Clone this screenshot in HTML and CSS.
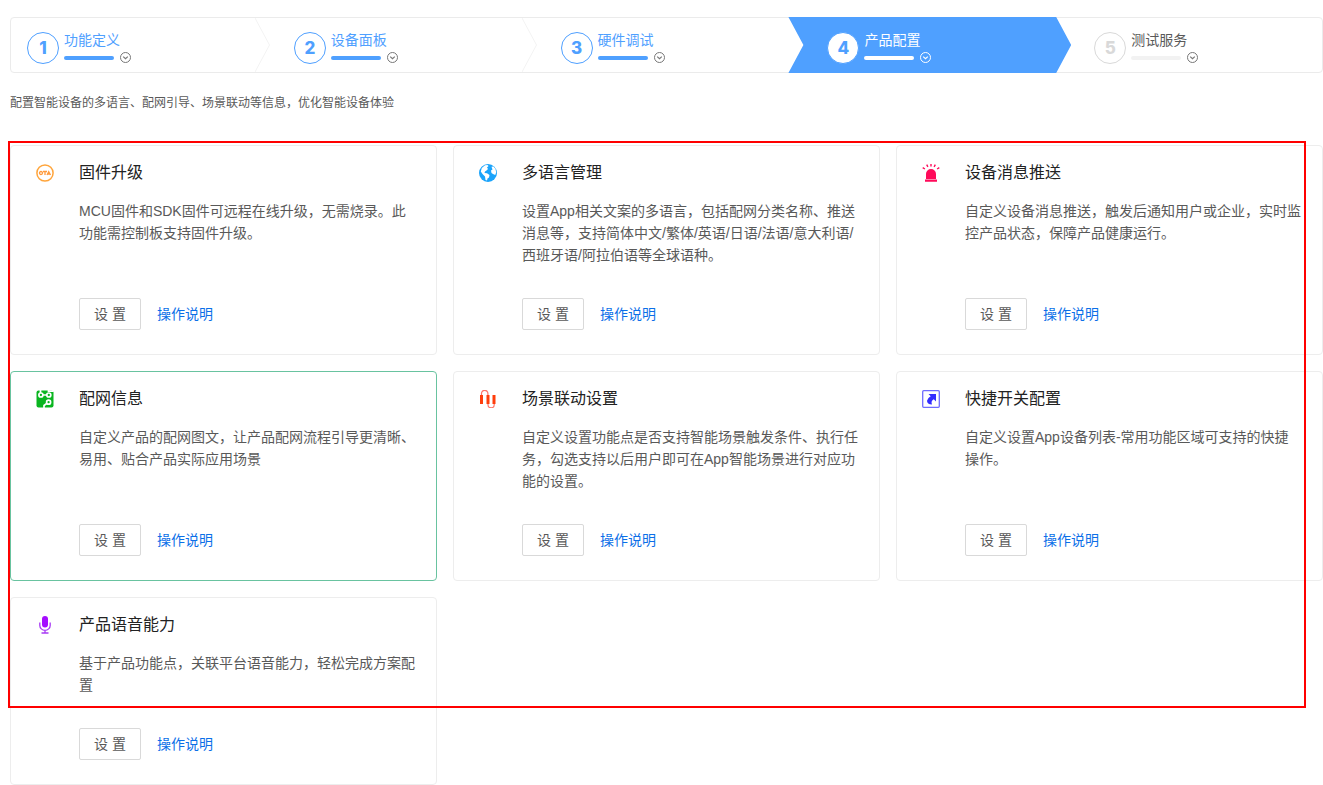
FILE: index.html
```html
<!DOCTYPE html>
<html lang="zh-CN">
<head>
<meta charset="utf-8">
<meta name="viewport" content="width=device-width, initial-scale=1">
<title>产品配置</title>
<link rel="stylesheet" href="styles.css">
</head>
<body>
<svg class="sprite" aria-hidden="true">
  <symbol id="chevron" viewBox="0 0 11 11">
    <circle cx="5.5" cy="5.5" r="5" fill="none" stroke="currentColor"/>
    <path d="M3.2 4.6 5.5 6.7 7.8 4.6" fill="none" stroke="currentColor" stroke-width="1.2"/>
  </symbol>
  <symbol id="arrow" viewBox="0 0 15 54">
    <path d="M0 0 14.5 27 0 54" fill="none" stroke="currentColor"/>
  </symbol>
</svg>

<ol class="steps">
  <li class="step done">
    <span class="num">1</span>
    <div class="step-body">
      <a class="step-title" href="#">功能定义</a>
      <div class="step-meta"><span class="bar"></span><button class="toggle" type="button" aria-label="展开功能定义"><svg><use href="#chevron"/></svg></button></div>
    </div>
    <svg class="arrow"><use href="#arrow"/></svg>
  </li>
  <li class="step done">
    <span class="num">2</span>
    <div class="step-body">
      <a class="step-title" href="#">设备面板</a>
      <div class="step-meta"><span class="bar"></span><button class="toggle" type="button" aria-label="展开设备面板"><svg><use href="#chevron"/></svg></button></div>
    </div>
    <svg class="arrow"><use href="#arrow"/></svg>
  </li>
  <li class="step done">
    <span class="num">3</span>
    <div class="step-body">
      <a class="step-title" href="#">硬件调试</a>
      <div class="step-meta"><span class="bar"></span><button class="toggle" type="button" aria-label="展开硬件调试"><svg><use href="#chevron"/></svg></button></div>
    </div>
  </li>
  <li class="step active" aria-current="step">
    <span class="num">4</span>
    <div class="step-body">
      <a class="step-title" href="#">产品配置</a>
      <div class="step-meta"><span class="bar"></span><button class="toggle" type="button" aria-label="展开产品配置"><svg><use href="#chevron"/></svg></button></div>
    </div>
  </li>
  <li class="step">
    <span class="num">5</span>
    <div class="step-body">
      <a class="step-title" href="#">测试服务</a>
      <div class="step-meta"><span class="bar"></span><button class="toggle" type="button" aria-label="展开测试服务"><svg><use href="#chevron"/></svg></button></div>
    </div>
  </li>
</ol>

<p class="intro">配置智能设备的多语言、配网引导、场景联动等信息，优化智能设备体验</p>

<main class="cards">
  <section class="card">
    <svg class="icon" viewBox="0 0 18 18">
      <circle cx="9" cy="9" r="8.1" fill="none" stroke="#ffa53c" stroke-width="1.5"/>
      <g fill="none" stroke="#ff9a3c" stroke-width="1.3">
        <ellipse cx="5" cy="9" rx="1.500" ry="1.500"/>
        <path d="M7 7.500h4M9 7.500V11M11 11l1.700-3.400L14.500 11M11.700 10h2"/>
      </g>
    </svg>
    <div class="card-body">
      <h2>固件升级</h2>
      <p>MCU固件和SDK固件可远程在线升级，无需烧录。此功能需控制板支持固件升级。</p>
      <div class="actions"><button class="btn" type="button">设 置</button><a href="#">操作说明</a></div>
    </div>
  </section>
  <section class="card">
    <svg class="icon" viewBox="0 0 18 18">
      <circle cx="9" cy="9" r="9" fill="#1ba4fb"/>
      <path fill="#fff" d="M6 1.300 8.500 1 9.500 2 8 3.500 9 5 7.500 6.500 6 7.500 5.500 9l2.500.3 2.500 1.700-.5 2.500-1.500 1-.5 2-1.500-.5-.5-3.500L3.500 10 1.800 7.500l1-3.500ZM12.500 2.800l2-.3L16.500 5l.7 3.500-1 2.500L14 10l-1.500-1L12 6.500l1.500-1Z"/>
    </svg>
    <div class="card-body">
      <h2>多语言管理</h2>
      <p>设置App相关文案的多语言，包括配网分类名称、推送消息等，支持简体中文/繁体/英语/日语/法语/意大利语/西班牙语/阿拉伯语等全球语种。</p>
      <div class="actions"><button class="btn" type="button">设 置</button><a href="#">操作说明</a></div>
    </div>
  </section>
  <section class="card">
    <svg class="icon" viewBox="0 0 18 18">
      <path fill="#ff0a5a" d="M4 15v-5a5 5 0 0 1 10 0v5ZM3 15.500h12V17.700H3Z"/>
      <path fill="none" stroke="#ff0a5a" stroke-width="1.400" d="M.7 3.600 2.900 5M4.700.6 5.900 2.900M9 0v2.500M13.300.6 12.100 2.900M17.300 3.600 15.100 5"/>
    </svg>
    <div class="card-body">
      <h2>设备消息推送</h2>
      <p>自定义设备消息推送，触发后通知用户或企业，实时监控产品状态，保障产品健康运行。</p>
      <div class="actions"><button class="btn" type="button">设 置</button><a href="#">操作说明</a></div>
    </div>
  </section>
  <section class="card selected">
    <svg class="icon" viewBox="0 0 18 18">
      <rect x=".5" y=".5" width="17" height="17" rx="2" fill="#0ab520"/>
      <g fill="none" stroke="#fff" stroke-width="1.700">
        <path d="M4.500 0v3M7 5h3.500M8 18v-2.500l2.700-2"/>
        <path d="M12.500 0v1.200h5"/>
        <circle cx="4.900" cy="5" r="2"/>
        <circle cx="12.800" cy="5" r="2"/>
        <circle cx="12.600" cy="12.200" r="2"/>
      </g>
    </svg>
    <div class="card-body">
      <h2>配网信息</h2>
      <p>自定义产品的配网图文，让产品配网流程引导更清晰、易用、贴合产品实际应用场景</p>
      <div class="actions"><button class="btn" type="button">设 置</button><a href="#">操作说明</a></div>
    </div>
  </section>
  <section class="card">
    <svg class="icon" viewBox="0 0 18 18">
      <path fill="#ff3e0c" d="M1 5h3v9H1ZM7.500 5h3v9h-3ZM13.500 5h3v9h-3Z"/>
      <path fill="none" stroke="#ff7468" stroke-width="1.200" d="M2.500 5V3.500a3.200 3.200 0 0 1 6.400 0V5M9 14v.7a3.100 3.100 0 0 0 6.200 0V14"/>
    </svg>
    <div class="card-body">
      <h2>场景联动设置</h2>
      <p>自定义设置功能点是否支持智能场景触发条件、执行任务，勾选支持以后用户即可在App智能场景进行对应功能的设置。</p>
      <div class="actions"><button class="btn" type="button">设 置</button><a href="#">操作说明</a></div>
    </div>
  </section>
  <section class="card">
    <svg class="icon" viewBox="0 0 18 18">
      <rect x=".7" y=".7" width="16.600" height="16.600" rx="1" fill="#fff" stroke="#6f6cff" stroke-width="1.300"/>
      <path fill="#332dff" d="M6.500 4H14v7.500L11.800 9.300Q8.500 11 10 14.500 5 14.500 5 10.800 5.200 8.200 8.700 6.200Z"/>
    </svg>
    <div class="card-body">
      <h2>快捷开关配置</h2>
      <p>自定义设置App设备列表-常用功能区域可支持的快捷操作。</p>
      <div class="actions"><button class="btn" type="button">设 置</button><a href="#">操作说明</a></div>
    </div>
  </section>
  <section class="card">
    <svg class="icon" viewBox="0 0 18 18">
      <rect x="6" y="0" width="6" height="11.500" rx="3" fill="#a50dff"/>
      <path fill="none" stroke="#a83af5" stroke-width="1.300" d="M3.800 6.500v3a5.200 4.800 0 0 0 10.400 0v-3M9 14v3M5.500 17h7"/>
    </svg>
    <div class="card-body">
      <h2>产品语音能力</h2>
      <p>基于产品功能点，关联平台语音能力，轻松完成方案配置</p>
      <div class="actions"><button class="btn" type="button">设 置</button><a href="#">操作说明</a></div>
    </div>
  </section>
  <div class="highlight"></div>
</main>
</body>
</html>
```
FILE: styles.css
```css
* {
  box-sizing: border-box;
}

body {
  margin: 0;
  padding: 17px 0 0 10px;
  background: #fff;
  color: #595959;
  font: 14px/22px "Liberation Sans", "Noto Sans CJK SC", sans-serif;
}

a {
  color: #0b6fe8;
  text-decoration: none;
}

.sprite {
  position: absolute;
  width: 0;
  height: 0;
}

.steps {
  display: flex;
  gap: 23px;
  margin: 0;
  padding: 0;
  list-style: none;
  border: 1px solid #ebebeb;
  border-radius: 4px;
}

.step {
  position: relative;
  display: flex;
  flex: 1;
  gap: 5px;
  padding: 12px 0 8px 16px;
  color: #d9d9d9;
}

.num {
  display: flex;
  align-items: center;
  justify-content: center;
  width: 32px;
  height: 32px;
  margin-top: 2px;
  border: 1px solid #d9d9d9;
  border-radius: 50%;
  font: 800 17px/20px Inter, sans-serif;
}

.step-title {
  display: block;
  line-height: 20px;
  color: #595959;
}

.step-meta {
  display: flex;
  align-items: center;
  gap: 6px;
  height: 12px;
  margin-top: 2px;
}

.bar {
  width: 50px;
  height: 4px;
  border-radius: 2px;
  background: #f2f2f2;
}

.toggle {
  display: flex;
  align-self: flex-start;
  padding: 0;
  border: 0;
  background: none;
  color: #777;
}

.toggle svg {
  width: 11px;
  height: 11px;
}

.arrow {
  position: absolute;
  top: 0;
  left: 100%;
  width: 15px;
  height: 54px;
  color: #f3f3f3;
}

.done .num {
  color: #4fa0ff;
  border-color: #4fa0ff;
}

.done .step-title {
  color: #4fa0ff;
}

.done .bar {
  background: #4fa0ff;
}

.active {
  z-index: 0;
}

.active::before {
  content: "";
  position: absolute;
  z-index: -1;
  inset: -1px -16px -1px -23px;
  background: #4fa0ff;
  clip-path: polygon(0 0, calc(100% - 15px) 0, 100% 50%, calc(100% - 15px) 100%, 0 100%, 15px 50%);
}

.active .num {
  color: #4fa0ff;
  background: #fff;
  border-color: #4fa0ff;
}

.active .step-title,
.active .toggle {
  color: #fff;
}

.active .bar {
  background: #fff;
}

.intro {
  margin: 20px 0 32px;
  font-size: 12px;
  line-height: 20px;
}

.cards {
  position: relative;
  display: grid;
  grid-template-columns: repeat(3, 1fr);
  gap: 16px;
}

.card {
  display: flex;
  gap: 25px;
  padding: 15px 20px 24px 25px;
  border: 1px solid #ededed;
  border-radius: 4px;
}

.selected {
  border-color: #69c3a0;
}

.icon {
  flex: none;
  width: 18px;
  height: 18px;
  margin-top: 3px;
}

.card-body {
  display: flex;
  flex: 1;
  flex-direction: column;
}

.card h2 {
  margin: 0 0 15px;
  color: #222;
  font-size: 16px;
  font-weight: 400;
  line-height: 24px;
}

.card p {
  margin: 0 0 32px;
}

.actions {
  display: flex;
  align-items: center;
  gap: 16px;
  margin-top: auto;
}

.btn {
  width: 62px;
  height: 32px;
  padding: 0;
  border: 1px solid #d9d9d9;
  border-radius: 2px;
  background: #fff;
  color: #595959;
  font: inherit;
}

.highlight {
  position: absolute;
  inset: -4px 17px 77px -2px;
  border: 2px solid #f00;
  pointer-events: none;
}
```
